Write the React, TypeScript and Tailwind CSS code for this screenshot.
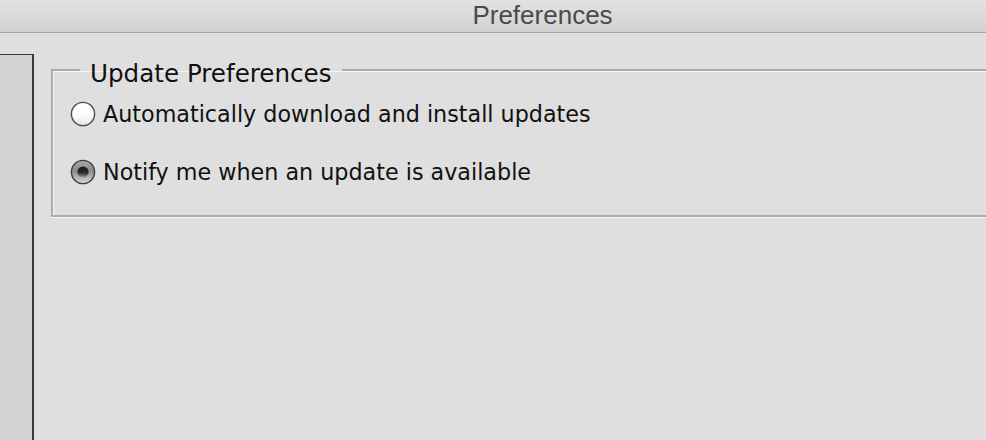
import React from 'react'

const font = { fontFamily: '"DejaVu Sans", "Liberation Sans", sans-serif' }

function Radio({ checked }: { checked: boolean }) {
    if (!checked) {
        return (
            <svg width="26" height="26" viewBox="0 0 26 26" className="shrink-0">
                <defs>
                    <linearGradient id="r-off" x1="0" y1="0" x2="0" y2="1">
                        <stop offset="0" stopColor="#ffffff" />
                        <stop offset="0.6" stopColor="#fafafa" />
                        <stop offset="1" stopColor="#e4e4e4" />
                    </linearGradient>
                </defs>
                <circle cx="13" cy="13" r="11.6" fill="url(#r-off)" stroke="#4a4a4a" strokeWidth="1.4" />
            </svg>
        )
    }
    return (
        <svg width="26" height="26" viewBox="0 0 26 26" className="shrink-0">
            <defs>
                <linearGradient id="r-on" x1="0" y1="0" x2="0" y2="1">
                    <stop offset="0" stopColor="#a8a8a8" />
                    <stop offset="0.45" stopColor="#8a8a8a" />
                    <stop offset="1" stopColor="#d8d8d8" />
                </linearGradient>
                <linearGradient id="r-dot" x1="0" y1="0" x2="0" y2="1">
                    <stop offset="0" stopColor="#1a1a1a" />
                    <stop offset="0.55" stopColor="#2a2a2a" />
                    <stop offset="1" stopColor="#9a9a9a" />
                </linearGradient>
            </defs>
            <circle cx="13" cy="13" r="11.6" fill="url(#r-on)" stroke="#3c3c3c" strokeWidth="1.4" />
            <circle cx="13" cy="13" r="5.6" fill="url(#r-dot)" />
        </svg>
    )
}

function Option({ label, checked }: { label: string; checked: boolean }) {
    return (
        <label className="flex items-center gap-[7px] h-[28px] leading-[28px] text-[22.25px] text-[#111111]">
            <Radio checked={checked} />
            <span>{label}</span>
        </label>
    )
}

export default function App() {
    return (
        <div className="w-[986px] h-[440px] overflow-hidden bg-[#dfdfdf] flex flex-col" style={font}>
            <header className="h-[33px] shrink-0 border-b border-[#a6a6a6] bg-gradient-to-b from-[#e2e2e2] to-[#d2d2d2] flex items-start justify-center pl-[99px]">
                <span
                    className="text-[26px] leading-[30px] text-[#4a4a4a]"
                    style={{ fontFamily: '"Liberation Sans", Arial, sans-serif' }}
                >
                    Preferences
                </span>
            </header>
            <div className="flex flex-1 min-h-0">
                <aside className="mt-[21px] w-[34px] shrink-0 border-t border-r-2 border-[#3a3a3a] bg-[#d3d3d3]" />
                <div className="flex-1 pt-[19px] pl-[17px]">
                    <fieldset className="w-[1000px] border-2 border-[#acacac] pl-[17px] pt-[12px] pb-[29px] shadow-[inset_1px_1px_0_#f6f6f6,0_1px_0_#f6f6f6]">
                        <legend className="ml-[10px] px-[10px] pt-[8px] text-[24.6px] leading-[28px] text-[#111111]">
                            Update Preferences
                        </legend>
                        <div className="flex flex-col gap-[30px]">
                            <Option label="Automatically download and install updates" checked={false} />
                            <Option label="Notify me when an update is available" checked={true} />
                        </div>
                    </fieldset>
                </div>
            </div>
        </div>
    )
}
